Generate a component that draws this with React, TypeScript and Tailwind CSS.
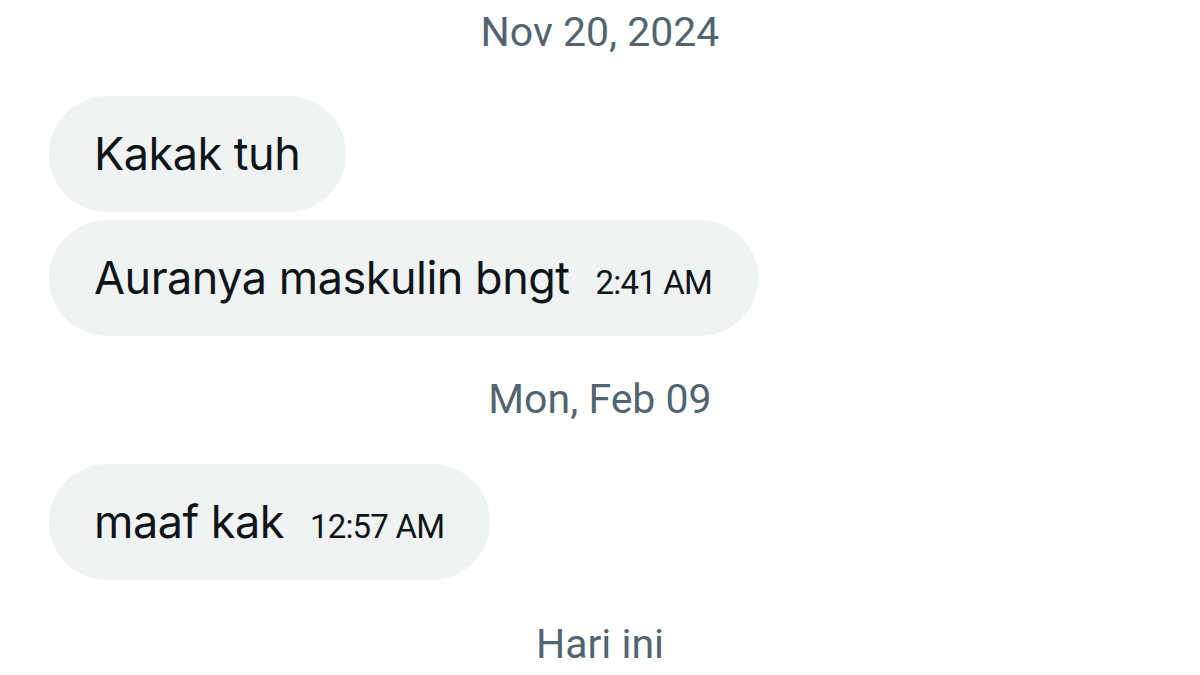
export default function App() {
  const dateCls =
    "shrink-0 flex items-center justify-center text-[41px] text-[#536471] font-['Roboto',sans-serif]";
  const bubbleCls =
    "shrink-0 h-[116px] rounded-full bg-[#eff3f4] pl-[45px] pr-[46px] flex items-center self-start";
  const msgCls = "text-[45px] text-[#0f1419] font-['Inter',sans-serif] tracking-[-0.5px]";
  const timeCls =
    "ml-[26px] mt-[10px] text-[33px] text-[#0f1419] font-['Roboto',sans-serif] tracking-[-0.8px]";

  return (
    <div className="w-[1200px] h-[675px] bg-white overflow-hidden flex flex-col px-[49px]">
      <div className={`h-[66px] ${dateCls}`}>Nov 20, 2024</div>

      <div className={`mt-[30px] ${bubbleCls}`}>
        <span className={msgCls}>Kakak tuh</span>
      </div>
      <div className={`mt-[8px] ${bubbleCls}`}>
        <span className={msgCls}>Auranya maskulin bngt</span>
        <span className={timeCls}>2:41 AM</span>
      </div>

      <div className={`h-[128px] ${dateCls}`}>Mon, Feb 09</div>

      <div className={bubbleCls}>
        <span className={msgCls}>maaf kak</span>
        <span className={timeCls}>12:57 AM</span>
      </div>

      <div className={`h-[130px] ${dateCls}`}>Hari ini</div>
    </div>
  );
}
